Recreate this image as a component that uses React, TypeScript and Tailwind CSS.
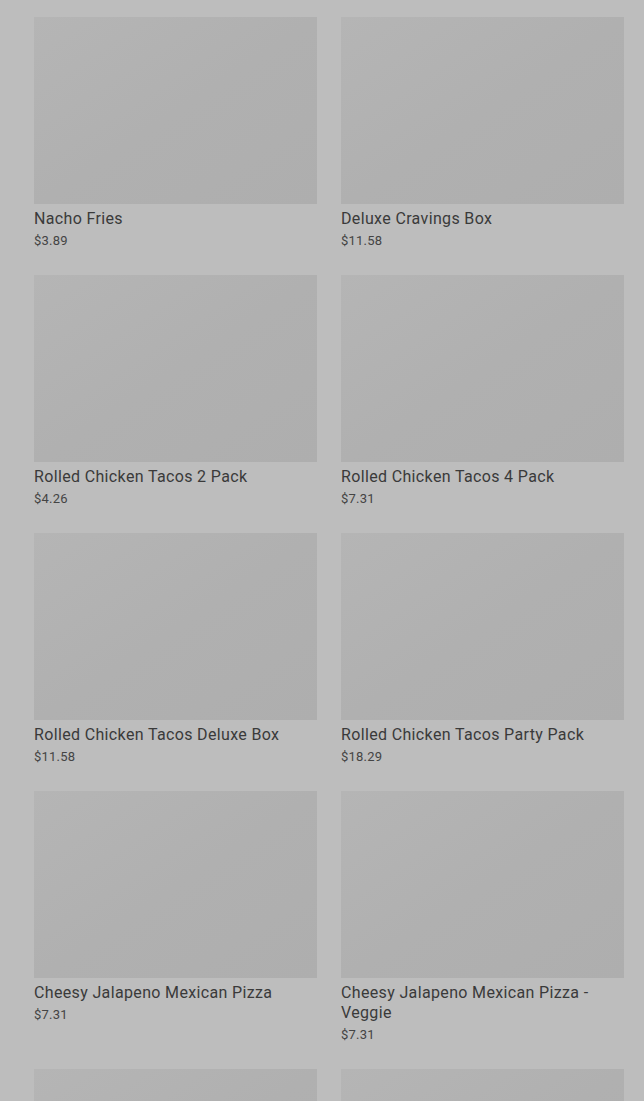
type MenuItem = {
  name: string
  price: string
}

const items: MenuItem[] = [
  { name: 'Nacho Fries', price: '$3.89' },
  { name: 'Deluxe Cravings Box', price: '$11.58' },
  { name: 'Rolled Chicken Tacos 2 Pack', price: '$4.26' },
  { name: 'Rolled Chicken Tacos 4 Pack', price: '$7.31' },
  { name: 'Rolled Chicken Tacos Deluxe Box', price: '$11.58' },
  { name: 'Rolled Chicken Tacos Party Pack', price: '$18.29' },
  { name: 'Cheesy Jalapeno Mexican Pizza', price: '$7.31' },
  { name: 'Cheesy Jalapeno Mexican Pizza - Veggie', price: '$7.31' },
  { name: 'Mexican Pizza', price: '$5.49' },
  { name: 'Veggie Mexican Pizza', price: '$5.49' },
]

function ItemCard({ item }: { item: MenuItem }) {
  return (
    <div className="flex flex-col">
      <div className="h-[187px] w-full bg-gradient-to-br from-[#b5b5b5] via-[#b0b0b0] to-[#aeaeae]" />
      <div className="mt-[5px] text-[16px] leading-5 tracking-[0.35px] text-[#3a3a3a]">{item.name}</div>
      <div className="mt-[3px] text-[13px] leading-[18px] tracking-[0.2px] text-[#444444]">{item.price}</div>
    </div>
  )
}

export default function App() {
  return (
    <div className="min-h-[1101px] bg-[#bdbdbd] font-['Roboto',sans-serif]">
      <div className="grid grid-cols-2 gap-x-6 gap-y-[25px] pb-6 pl-[34px] pr-5 pt-[17px]">
        {items.map((item) => (
          <ItemCard key={item.name} item={item} />
        ))}
      </div>
    </div>
  )
}
